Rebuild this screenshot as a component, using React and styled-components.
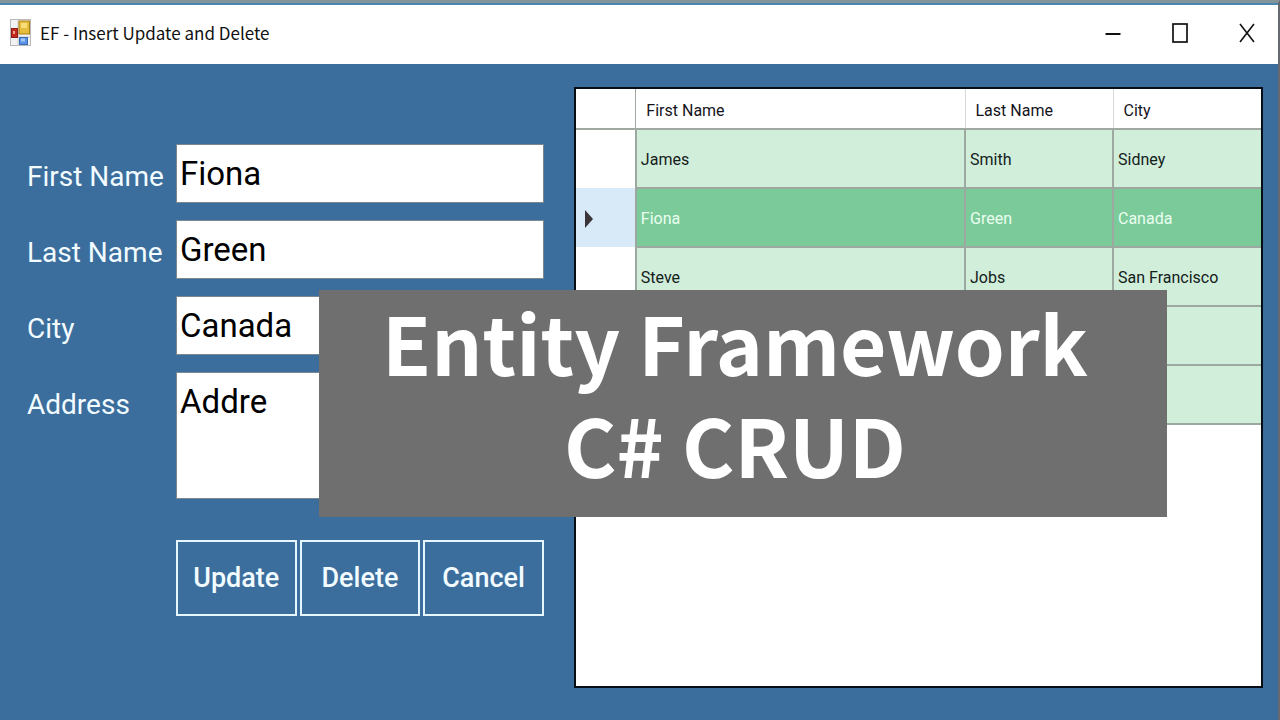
import React from "react";
import styled, { createGlobalStyle } from "styled-components";

const GlobalStyle = createGlobalStyle`
  * { box-sizing: border-box; }
  body {
    margin: 0;
    background: #3b6e9c;
    font-family: Roboto, "Liberation Sans", sans-serif;
  }
`;

const Window = styled.div`
  position: relative;
  display: flex;
  flex-direction: column;
  min-height: 100vh;
  border-top: 3px solid #84949b;
  border-right: 2px solid #66696d;
  background: #3b6e9c;
`;

const TitleBar = styled.header`
  display: flex;
  align-items: center;
  justify-content: space-between;
  height: 61px;
  padding: 0 14px 4px 10px;
  border-top: 2px solid #4a86b0;
  background: #fff;
`;

const Title = styled.h1`
  display: flex;
  align-items: center;
  gap: 9px;
  margin: 0;
  font: 400 17px/24px "Noto Sans CJK SC", sans-serif;
  color: #111;
`;

const Controls = styled.div`
  display: flex;
  gap: 33px;
`;

const ControlButton = styled.button`
  display: flex;
  align-items: center;
  justify-content: center;
  width: 34px;
  height: 40px;
  padding: 0;
  border: 0;
  background: none;
`;

const Content = styled.main`
  flex: 1;
  display: grid;
  grid-template-columns: minmax(0, 3fr) minmax(0, 4fr);
  gap: 30px;
  padding: 23px 15px 32px 27px;
`;

const Form = styled.form`
  display: flex;
  flex-direction: column;
  gap: 17px;
  padding-top: 57px;
`;

const Field = styled.div`
  display: grid;
  grid-template-columns: 149px minmax(0, 1fr);
  align-items: start;
`;

const Label = styled.label`
  padding-top: 6px;
  font-size: 28px;
  line-height: 53px;
  white-space: nowrap;
  color: #f2fbff;
`;

const TextBox = styled.input`
  width: 100%;
  height: 59px;
  padding: 0 3px;
  border: 1px solid #7d8790;
  border-radius: 0;
  outline: 0;
  background: #fff;
  font-family: inherit;
  font-size: 33px;
  color: #000;
`;

const TextArea = styled.textarea`
  display: block;
  width: 100%;
  height: 127px;
  padding: 6px 3px;
  border: 1px solid #7d8790;
  border-radius: 0;
  outline: 0;
  resize: none;
  background: #fff;
  font-family: inherit;
  font-size: 33px;
  line-height: 46px;
  color: #000;
`;

const Actions = styled.div`
  display: grid;
  grid-template-columns: repeat(3, 1fr);
  gap: 3px;
  margin: 24px 0 0 149px;
`;

const ActionButton = styled.button`
  height: 76px;
  padding: 0;
  border: 2px solid #e6f6ff;
  background: transparent;
  font-family: inherit;
  font-size: 27px;
  font-weight: 500;
  color: #f2fbff;
`;

const GridPanel = styled.section`
  border: 2px solid #060d14;
  background: #fff;
`;

const DataGrid = styled.table`
  width: 100%;
  table-layout: fixed;
  border-collapse: collapse;
  font-size: 16px;
  line-height: 26px;
  text-align: left;
`;

const Column = styled.col`
  width: ${(p) => p.$width};
`;

const HeadCell = styled.th`
  height: 40px;
  padding: 4px 10px 0;
  border-bottom: 2px solid #a0a8a2;
  border-left: 1px solid ${(p) => (p.$first ? "#a0a8a2" : "#d8d8d8")};
  font-weight: 400;
  color: #14141c;
`;

const Corner = styled.td`
  border-bottom: 2px solid #a0a8a2;
`;

const Marker = styled.th`
  height: 59px;
  padding: 3px 0 0 8px;
  vertical-align: middle;
  background: ${(p) => (p.$selected ? "#d8e9f8" : "#fff")};

  svg {
    display: block;
  }
`;

const Cell = styled.td`
  height: 59px;
  padding: 2px 4px 0;
  border: 2px solid #9da9a0;
  border-right: 0;
  background: ${(p) => (p.$selected ? "#7bca9a" : "#d1eedb")};
  color: ${(p) => (p.$selected ? "#eafff0" : "#14201a")};
`;

const Banner = styled.div`
  position: absolute;
  top: 287px;
  left: 319px;
  right: 111px;
  height: 227px;
  padding-right: 16px;
  background: #6f6f6f;
  color: #fff;
  font: 700 80px/102px "Noto Sans CJK SC", sans-serif;
  text-align: center;
  white-space: nowrap;
`;

const people = [
  ["James", "Smith", "Sidney"],
  ["Fiona", "Green", "Canada"],
  ["Steve", "Jobs", "San Francisco"],
  ["", "", ""],
  ["", "", ""],
];

const AppIcon = () => (
  <svg width="21" height="28" viewBox="0 0 21 28" aria-hidden="true">
    <rect x="0.5" y="0.5" width="20" height="26" fill="#f3f3f3" stroke="#b9b9b9" />
    <path d="M8 1v26M1 18h19" stroke="#c9c9c9" />
    <rect x="9" y="2" width="10.5" height="13" fill="#e6bd3c" stroke="#a98014" />
    <rect x="11" y="4" width="6" height="5" fill="#f8dc78" />
    <rect x="1.5" y="9.5" width="6" height="9" fill="#c22a20" stroke="#8f1d18" />
    <rect x="3" y="12" width="2" height="3" fill="#f1a08c" />
    <rect x="9.5" y="18.5" width="8" height="7" fill="#5b92e4" stroke="#3a6cbc" />
    <rect x="11" y="19.5" width="4" height="3" fill="#a3c6f6" />
  </svg>
);

export default function App() {
  return (
    <>
      <GlobalStyle />
      <Window>
        <TitleBar>
          <Title>
            <AppIcon />
            EF - Insert Update and Delete
          </Title>
          <Controls>
            <ControlButton aria-label="Minimize">
              <svg width="16" height="20" viewBox="0 0 16 20">
                <path d="M0.5 11h15" stroke="#111" strokeWidth="2" />
              </svg>
            </ControlButton>
            <ControlButton aria-label="Maximize">
              <svg width="16" height="20" viewBox="0 0 16 20">
                <rect x="1" y="1" width="14" height="18" fill="none" stroke="#111" strokeWidth="1.7" />
              </svg>
            </ControlButton>
            <ControlButton aria-label="Close">
              <svg width="16" height="20" viewBox="0 0 16 20">
                <path d="M1 1l14 18M15 1L1 19" stroke="#111" strokeWidth="1.6" />
              </svg>
            </ControlButton>
          </Controls>
        </TitleBar>
        <Content>
          <Form onSubmit={(e) => e.preventDefault()}>
            <Field>
              <Label htmlFor="first">First Name</Label>
              <TextBox id="first" defaultValue="Fiona" />
            </Field>
            <Field>
              <Label htmlFor="last">Last Name</Label>
              <TextBox id="last" defaultValue="Green" />
            </Field>
            <Field>
              <Label htmlFor="city">City</Label>
              <TextBox id="city" defaultValue="Canada" />
            </Field>
            <Field>
              <Label htmlFor="address">Address</Label>
              <TextArea id="address" defaultValue="Addre" />
            </Field>
            <Actions>
              <ActionButton type="submit">Update</ActionButton>
              <ActionButton type="button">Delete</ActionButton>
              <ActionButton type="button">Cancel</ActionButton>
            </Actions>
          </Form>
          <GridPanel>
            <DataGrid>
              <colgroup>
                <Column $width="60px" />
                <Column />
                <Column $width="148px" />
                <Column $width="148px" />
              </colgroup>
              <thead>
                <tr>
                  <Corner />
                  <HeadCell $first scope="col">First Name</HeadCell>
                  <HeadCell scope="col">Last Name</HeadCell>
                  <HeadCell scope="col">City</HeadCell>
                </tr>
              </thead>
              <tbody>
                {people.map((person, row) => {
                  const selected = row === 1;
                  return (
                    <tr key={row} aria-selected={selected}>
                      <Marker scope="row" $selected={selected}>
                        {selected && (
                          <svg width="10" height="20" viewBox="0 0 10 20" aria-label="Current row">
                            <path d="M1 1l8 9-8 9z" fill="#3b3537" />
                          </svg>
                        )}
                      </Marker>
                      {person.map((value, i) => (
                        <Cell key={i} $selected={selected}>{value}</Cell>
                      ))}
                    </tr>
                  );
                })}
              </tbody>
            </DataGrid>
          </GridPanel>
        </Content>
        <Banner>
          Entity Framework
          <br />
          C# CRUD
        </Banner>
      </Window>
    </>
  );
}
